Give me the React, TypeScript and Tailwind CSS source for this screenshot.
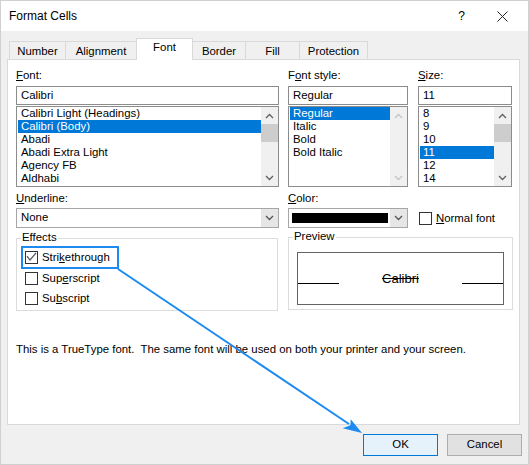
import React from "react";

const fontItems = ["Calibri Light (Headings)", "Calibri (Body)", "Abadi", "Abadi Extra Light", "Agency FB", "Aldhabi"];
const styleItems = ["Regular", "Italic", "Bold", "Bold Italic"];
const sizeItems = ["8", "9", "10", "11", "12", "14"];

const tabs = [
  { label: "Number", className: "h-[18px] w-[56px] border-l border-t border-[#d9d9d9] pt-[2px]" },
  { label: "Alignment", className: "h-[18px] w-[71px] border-l border-t border-[#d9d9d9] pt-[2px]" },
  { label: "Font", className: "relative z-10 -mb-[1px] h-[22px] w-[57px] border-x border-t border-[#d9d9d9] bg-white pt-[1px]" },
  { label: "Border", className: "h-[18px] w-[52px] border-t border-[#d9d9d9] pt-[2px]" },
  { label: "Fill", className: "h-[18px] w-[54px] border-l border-t border-[#d9d9d9] pt-[2px]" },
  { label: "Protection", className: "h-[18px] w-[69px] border-x border-t border-[#d9d9d9] pt-[2px]" },
];

function Chevron({ up = false, color = "#606060" }: { up?: boolean; color?: string }) {
  return (
    <svg width="9" height="6" viewBox="0 0 9 6">
      <path d={up ? "M1 5 L4.5 1.5 L8 5" : "M1 1 L4.5 4.5 L8 1"} fill="none" stroke={color} strokeWidth="1.3" />
    </svg>
  );
}

function ScrollBar({ disabled = false }: { disabled?: boolean }) {
  const color = disabled ? "#c4c4c4" : "#606060";
  return (
    <div className="flex w-[17px] flex-col bg-[#f0f0f0]">
      <div className="flex h-[17px] items-center justify-center">
        <Chevron up color={color} />
      </div>
      {!disabled && <div className="h-[18px] bg-[#cdcdcd]" />}
      <div className="flex-1" />
      <div className="flex h-[17px] items-center justify-center">
        <Chevron color={color} />
      </div>
    </div>
  );
}

function ListBox({ items, selected, disabled }: { items: string[]; selected: number; disabled?: boolean }) {
  return (
    <div className="mt-[1px] flex h-[81px] border border-[#8c8c8c] bg-white">
      <div className="flex-1 overflow-hidden pl-[1px]">
        {items.map((item, i) => (
          <div
            key={item}
            className={
              i === selected
                ? "h-[13px] whitespace-nowrap bg-[#0078d7] pl-[3px] leading-[13px] text-white"
                : "h-[13px] whitespace-nowrap pl-[3px] leading-[13px]"
            }
          >
            {item}
          </div>
        ))}
      </div>
      <ScrollBar disabled={disabled} />
    </div>
  );
}

function TextBox({ value }: { value: string }) {
  return <div className="flex h-[19px] items-center border border-[#8c8c8c] bg-white pl-[4px]">{value}</div>;
}

function CheckBox({ checked = false }: { checked?: boolean }) {
  return (
    <span className="flex h-[13px] w-[13px] shrink-0 items-center justify-center border border-[#333333] bg-white">
      {checked && (
        <svg width="11" height="11" viewBox="0 0 11 11">
          <path d="M1 4.2 L4 8 L10 1" fill="none" stroke="#555555" strokeWidth="1.2" />
        </svg>
      )}
    </span>
  );
}

function Key({ children }: { children: React.ReactNode }) {
  return <span className="underline decoration-1 underline-offset-[1px]">{children}</span>;
}

export default function App() {
  return (
    <div className="relative h-[465px] w-[529px] overflow-hidden border border-[#d0d0d0] bg-[#f0f0f0] font-['Liberation_Sans',Arial,sans-serif] text-[11.4px] text-black">
      {/* title bar */}
      <div className="flex h-[30px] items-center bg-white pl-[8px] pr-[20px]">
        <span className="text-[12px]">Format Cells</span>
        <div className="ml-auto flex items-center gap-[32px]">
          <span className="text-[12px]">?</span>
          <svg width="11" height="11" viewBox="0 0 11 11">
            <path d="M0.5 0.5 L10.5 10.5 M10.5 0.5 L0.5 10.5" stroke="#222" strokeWidth="1" />
          </svg>
        </div>
      </div>

      {/* tabs */}
      <div className="ml-[8px] mt-[7px] flex h-[21px] items-end">
        {tabs.map((tab) => (
          <div key={tab.label} className={`flex justify-center leading-[14px] ${tab.className}`}>
            {tab.label}
          </div>
        ))}
      </div>

      {/* panel */}
      <div className="ml-[6px] h-[366px] w-[513px] border border-[#d9d9d9] bg-white pl-[8px] pt-[8px]">
        <div className="flex">
          <div className="w-[263px]">
            <div className="h-[14px] leading-[14px]">
              <Key>F</Key>ont:
            </div>
            <div className="mt-[4px]">
              <TextBox value="Calibri" />
            </div>
            <ListBox items={fontItems} selected={1} />
          </div>
          <div className="ml-[9px] w-[120px]">
            <div className="h-[14px] leading-[14px]">
              F<Key>o</Key>nt style:
            </div>
            <div className="mt-[4px]">
              <TextBox value="Regular" />
            </div>
            <ListBox items={styleItems} selected={0} disabled />
          </div>
          <div className="ml-[10px] w-[94px]">
            <div className="h-[14px] leading-[14px]">
              <Key>S</Key>ize:
            </div>
            <div className="mt-[4px]">
              <TextBox value="11" />
            </div>
            <ListBox items={sizeItems} selected={3} />
          </div>
        </div>

        <div className="mt-[4px] flex">
          <div className="w-[263px]">
            <div className="h-[14px] leading-[14px]">
              <Key>U</Key>nderline:
            </div>
            <div className="mt-[3px] flex h-[20px] border border-[#a6a6a6] bg-white">
              <div className="flex flex-1 items-center pl-[4px]">None</div>
              <div className="flex w-[17px] items-center justify-center bg-[#e6e6e6]">
                <Chevron color="#555555" />
              </div>
            </div>
          </div>
          <div className="ml-[9px] w-[120px]">
            <div className="h-[14px] leading-[14px]">
              <Key>C</Key>olor:
            </div>
            <div className="mt-[3px] flex h-[20px] border border-[#a6a6a6] bg-white">
              <div className="flex flex-1 items-center pl-[3px]">
                <div className="h-[10px] w-[96px] bg-black" />
              </div>
              <div className="flex w-[17px] items-center justify-center bg-[#e6e6e6]">
                <Chevron color="#555555" />
              </div>
            </div>
          </div>
          <div className="ml-[10px] w-[94px] pt-[21px]">
            <div className="ml-[1px] flex h-[13px] items-center gap-[4px]">
              <CheckBox />
              <span>
                <Key>N</Key>ormal font
              </span>
            </div>
          </div>
        </div>

        <div className="mt-[9px] flex items-start">
          <div className="relative mt-[1px] h-[73px] w-[262px] border border-[#dcdcdc] pl-[4px] pt-[7px]">
            <span className="absolute -top-[9px] left-[4px] bg-white px-[1px] leading-[14px]">Effects</span>
            <div className="flex h-[23px] w-[98px] items-center gap-[4px] border-2 border-[#1c8af0] pl-[2px]">
              <CheckBox checked />
              <span>
                Stri<Key>k</Key>ethrough
              </span>
            </div>
            <div className="mt-[3px] flex h-[13px] items-center gap-[4px] pl-[4px]">
              <CheckBox />
              <span>
                Sup<Key>e</Key>rscript
              </span>
            </div>
            <div className="mt-[7px] flex h-[13px] items-center gap-[4px] pl-[4px]">
              <CheckBox />
              <span>
                Su<Key>b</Key>script
              </span>
            </div>
          </div>
          <div className="relative ml-[10px] h-[73px] w-[225px] border border-[#dcdcdc] pl-[8px] pt-[14px]">
            <span className="absolute -top-[9px] left-[4px] bg-white px-[1px] leading-[14px]">Preview</span>
            <div className="h-[53px] w-[207px] border border-[#646464]">
              <div className="mt-[19px] flex h-[13px] items-end">
                <div className="mb-[1px] h-px w-[41px] bg-black" />
                <div className="flex-1 text-center text-[13px] leading-[13px] line-through">Calibri</div>
                <div className="mb-[1px] h-px w-[41px] bg-black" />
              </div>
            </div>
          </div>
        </div>

        <div className="mt-[31px] h-[14px] whitespace-pre leading-[14px]">
          This is a TrueType font.  The same font will be used on both your printer and your screen.
        </div>
      </div>

      {/* buttons */}
      <div className="mt-[9px] flex justify-end gap-[9px] pr-[6px]">
        <button className="flex h-[22px] w-[75px] items-center justify-center border border-[#0078d7] bg-[#e5f1fb]">OK</button>
        <button className="flex h-[22px] w-[75px] items-center justify-center border border-[#adadad] bg-[#e1e1e1]">Cancel</button>
      </div>

      {/* callout arrow */}
      <svg className="pointer-events-none absolute inset-0 h-full w-full" viewBox="0 0 527 463">
        <line x1="117" y1="268" x2="348" y2="423" stroke="#1c8af0" strokeWidth="2" />
        <path d="M361 432 L341.7 427.3 L349.4 424.2 L349.7 418.3 Z" fill="#1c8af0" />
      </svg>
    </div>
  );
}
